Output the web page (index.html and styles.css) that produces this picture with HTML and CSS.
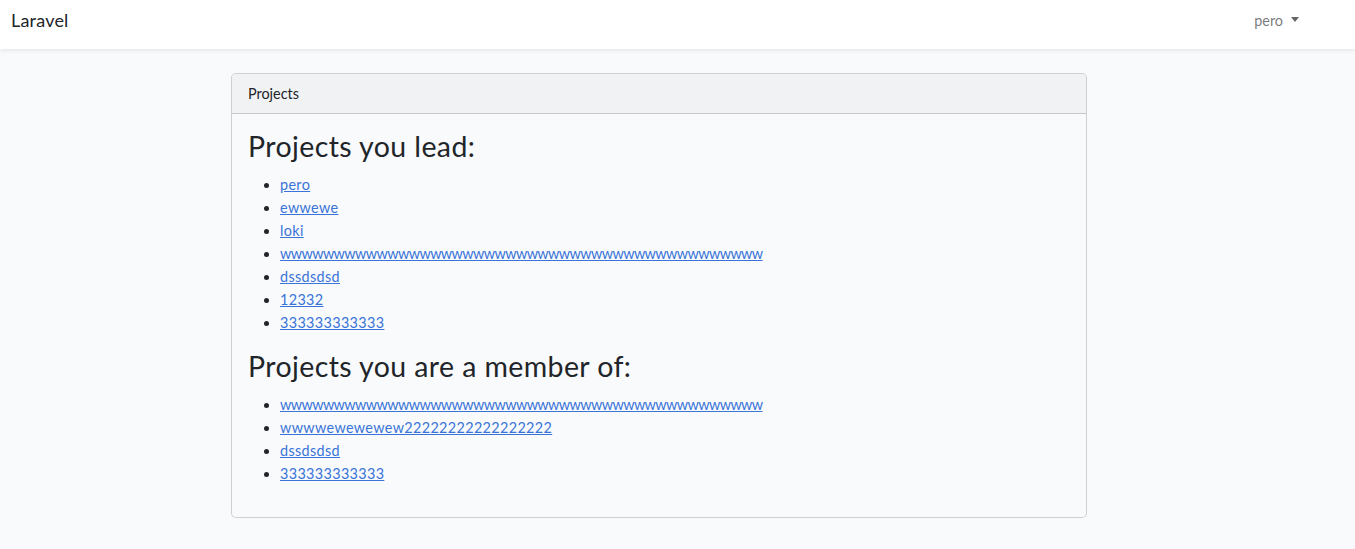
FILE: index.html
```html
<!DOCTYPE html>
<html lang="en">
<head>
<meta charset="utf-8">
<title>Laravel</title>
<link rel="stylesheet" href="styles.css">
</head>
<body>
<nav class="navbar">
  <a class="brand" href="#">Laravel</a>
  <div class="user">
    <a class="user-toggle" href="#">pero<span class="caret"></span></a>
  </div>
</nav>
<main class="main">
  <div class="card">
    <div class="card-header">Projects</div>
    <div class="card-body">
      <h3 class="section-title">Projects you lead:</h3>
      <ul class="project-list">
        <li><a href="#">pero</a></li>
        <li><a href="#">ewwewe</a></li>
        <li><a href="#">loki</a></li>
        <li><a class="tight" href="#">wwwwwwwwwwwwwwwwwwwwwwwwwwwwwwwwwwwwwwwwwwwww</a></li>
        <li><a href="#">dssdsdsd</a></li>
        <li><a href="#">12332</a></li>
        <li><a href="#">333333333333</a></li>
      </ul>
      <h3 class="section-title">Projects you are a member of:</h3>
      <ul class="project-list">
        <li><a class="tight" href="#">wwwwwwwwwwwwwwwwwwwwwwwwwwwwwwwwwwwwwwwwwwwww</a></li>
        <li><a href="#">wwwwewewewew22222222222222222</a></li>
        <li><a href="#">dssdsdsd</a></li>
        <li><a href="#">333333333333</a></li>
      </ul>
    </div>
  </div>
</main>
</body>
</html>
```

FILE: styles.css
```css
* { box-sizing: border-box; }
html, body { margin: 0; padding: 0; }
body {
  background: #f8fafc;
  color: #212529;
  font-family: "Lato", "Noto Sans", sans-serif;
  font-size: 14.4px;
  line-height: 1.6;
}
.navbar {
  height: 49px;
  background: #fff;
  box-shadow: 0 2px 4px rgba(0,0,0,0.075);
  display: flex;
  align-items: center;
  justify-content: space-between;
  padding: 0 56px 0 11px;
}
.brand {
  color: #212529;
  text-decoration: none;
  font-size: 18px;
  letter-spacing: 0.2px;
  line-height: 1;
  margin-top: -9px;
}
.user-toggle {
  color: rgba(0,0,0,0.55);
  text-decoration: none;
  font-size: 14.4px;
  display: flex;
  align-items: center;
  margin-top: -7px;
}
.caret {
  display: inline-block;
  margin-left: 8px;
  width: 0; height: 0;
  border-top: 5px solid rgba(0,0,0,0.6);
  border-left: 4px solid transparent;
  border-right: 4px solid transparent;
  margin-top: -2px;
}
.main {
  display: flex;
  justify-content: center;
  padding: 24px 0;
}
.card {
  width: 856px;
  margin-left: -37px;
  border: 1px solid rgba(0,0,0,0.17);
  border-radius: 5px;
  background: #f8fafc;
}
.card-header {
  height: 40px;
  padding: 8px 16px;
  background: #f1f2f4;
  border-bottom: 1px solid rgba(0,0,0,0.17);
  border-radius: 4px 4px 0 0;
  line-height: 23px;
}
.card-body {
  padding: 15px 16px 19px;
}
.section-title {
  margin: 0 0 10px;
  font-weight: 400;
  font-size: 28.5px;
  letter-spacing: 0.4px;
  line-height: 34px;
}
.project-list {
  margin: 0 0 15px;
  padding-left: 32px;
}
.project-list li { line-height: 23px; }
.project-list a {
  color: #3a74d8;
  text-decoration: underline;
  letter-spacing: 0.35px;
}
.project-list a.tight { letter-spacing: -0.58px; }
.project-list:last-child { margin-bottom: 13px; }
```
